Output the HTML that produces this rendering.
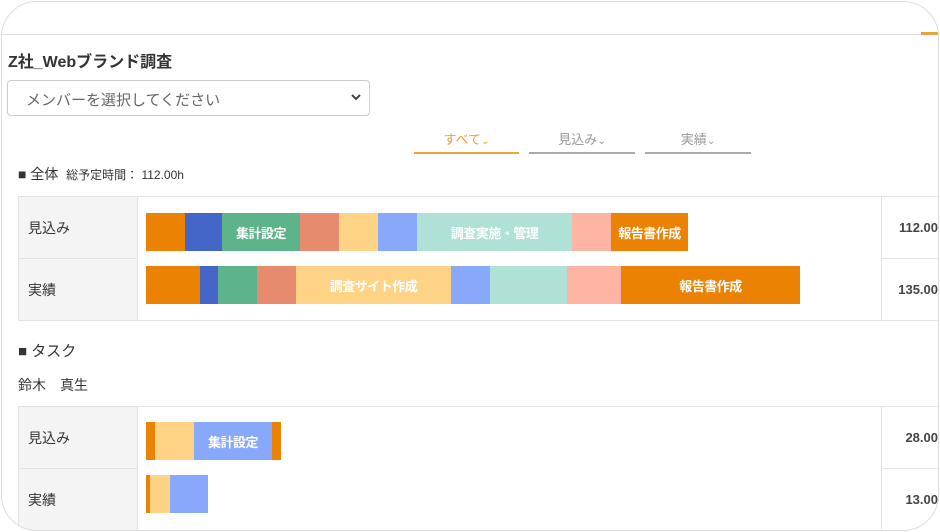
<!DOCTYPE html>
<html><head><meta charset="utf-8"><style>
*{box-sizing:border-box;margin:0;padding:0}
body{width:940px;height:532px;background:#fff;overflow:hidden;position:relative;font-family:"Liberation Sans","Noto Sans CJK JP",sans-serif;color:#333}
.frame{position:absolute;left:1px;top:1px;width:938px;height:530px;border:1px solid #ddd;border-radius:36px;z-index:5;box-shadow:0 0 0 30px #fff}
.a{position:absolute}
.hl{position:absolute;left:2px;right:0;top:34px;height:1px;background:#ddd}
.sel{left:7px;top:80px;width:363px;height:36px;border:1px solid #ccc;border-radius:4px;font-size:15px;color:#666;padding:8px 0 0 18px}
.tab{top:126px;height:28px;font-size:13px;color:#999;text-align:center;border-bottom:2px solid #aaa;padding-top:3px}
.cell{position:absolute;border:1px solid #e3e3e3;font-size:14px}
.lbl{background:#f4f4f4;padding-left:9px;display:flex;align-items:center}
.num{display:flex;align-items:center;justify-content:flex-end;font-weight:bold;font-size:13px;color:#444}
.seg{position:absolute;height:38px;color:#fff;font-weight:bold;font-size:13px;display:flex;align-items:center;justify-content:center;white-space:nowrap;overflow:hidden;letter-spacing:-0.5px}
</style></head><body>
<div class="frame"></div>
<div class="hl"></div>
<div class="a" style="left:921px;top:32px;width:17px;height:3px;background:#e8a33a"></div>
<div class="a" style="left:8px;top:48px;font-size:16px;font-weight:bold;color:#333">Z社_Webブランド調査</div>
<div class="a sel">メンバーを選択してください<svg style="position:absolute;right:8px;top:13px" width="10" height="7" viewBox="0 0 10 7"><path d="M1 1l4 4 4-4" stroke="#444" stroke-width="2" fill="none"/></svg></div>
<div class="a tab" style="left:414px;width:105px;color:#e8a33a;border-color:#e8a33a">すべて<span style="font-size:10px">&#8964;</span></div>
<div class="a tab" style="left:529px;width:106px">見込み<span style="font-size:10px">&#8964;</span></div>
<div class="a tab" style="left:645px;width:106px">実績<span style="font-size:10px">&#8964;</span></div>
<div class="a" style="left:18px;top:164px;font-size:14px">■ 全体 &nbsp;<span style="font-size:12px">総予定時間： 112.00h</span></div>

<div class="cell lbl" style="left:18px;top:196px;width:120px;height:63px">見込み</div>
<div class="cell lbl" style="left:18px;top:258px;width:120px;height:63px">実績</div>
<div class="cell" style="left:137px;top:196px;width:745px;height:125px"></div>
<div class="cell num" style="left:881px;top:196px;width:70px;height:63px;padding-right:12px">112.00</div>
<div class="cell num" style="left:881px;top:258px;width:70px;height:63px;padding-right:12px">135.00</div>

<div class="seg" style="top:213px;left:146px;width:39px;background:#ec8203"></div>
<div class="seg" style="top:213px;left:185px;width:37px;background:#4466c8"></div>
<div class="seg" style="top:213px;left:222px;width:78px;background:#5db38a">集計設定</div>
<div class="seg" style="top:213px;left:300px;width:39px;background:#e68b6d"></div>
<div class="seg" style="top:213px;left:339px;width:39px;background:#fed386"></div>
<div class="seg" style="top:213px;left:378px;width:39px;background:#88a8fb"></div>
<div class="seg" style="top:213px;left:417px;width:155px;background:#b0e1d6">調査実施・管理</div>
<div class="seg" style="top:213px;left:572px;width:39px;background:#fdb4a3"></div>
<div class="seg" style="top:213px;left:611px;width:77px;background:#ec8203">報告書作成</div>

<div class="seg" style="top:266px;left:146px;width:54px;background:#ec8203"></div>
<div class="seg" style="top:266px;left:200px;width:18px;background:#4466c8"></div>
<div class="seg" style="top:266px;left:218px;width:39px;background:#5db38a"></div>
<div class="seg" style="top:266px;left:257px;width:39px;background:#e68b6d"></div>
<div class="seg" style="top:266px;left:296px;width:155px;background:#fed386">調査サイト作成</div>
<div class="seg" style="top:266px;left:451px;width:39px;background:#88a8fb"></div>
<div class="seg" style="top:266px;left:490px;width:77px;background:#b0e1d6"></div>
<div class="seg" style="top:266px;left:567px;width:54px;background:#fdb4a3"></div>
<div class="seg" style="top:266px;left:621px;width:179px;background:#ec8203">報告書作成</div>

<div class="a" style="left:18px;top:340px;font-size:15px">■ タスク</div>
<div class="a" style="left:18px;top:375px;font-size:14px">鈴木　真生</div>

<div class="cell lbl" style="left:18px;top:406px;width:120px;height:63px">見込み</div>
<div class="cell lbl" style="left:18px;top:468px;width:120px;height:63px">実績</div>
<div class="cell" style="left:137px;top:406px;width:745px;height:125px"></div>
<div class="cell num" style="left:881px;top:406px;width:70px;height:63px;padding-right:12px">28.00</div>
<div class="cell num" style="left:881px;top:468px;width:70px;height:63px;padding-right:12px">13.00</div>

<div class="seg" style="top:422px;left:146px;width:9px;background:#ec8203"></div>
<div class="seg" style="top:422px;left:155px;width:39px;background:#fed386"></div>
<div class="seg" style="top:422px;left:194px;width:78px;background:#88a8fb">集計設定</div>
<div class="seg" style="top:422px;left:272px;width:9px;background:#ec8203"></div>
<div class="seg" style="top:475px;left:146px;width:4px;background:#ec8203"></div>
<div class="seg" style="top:475px;left:150px;width:20px;background:#fed386"></div>
<div class="seg" style="top:475px;left:170px;width:38px;background:#88a8fb"></div>
</body></html>
